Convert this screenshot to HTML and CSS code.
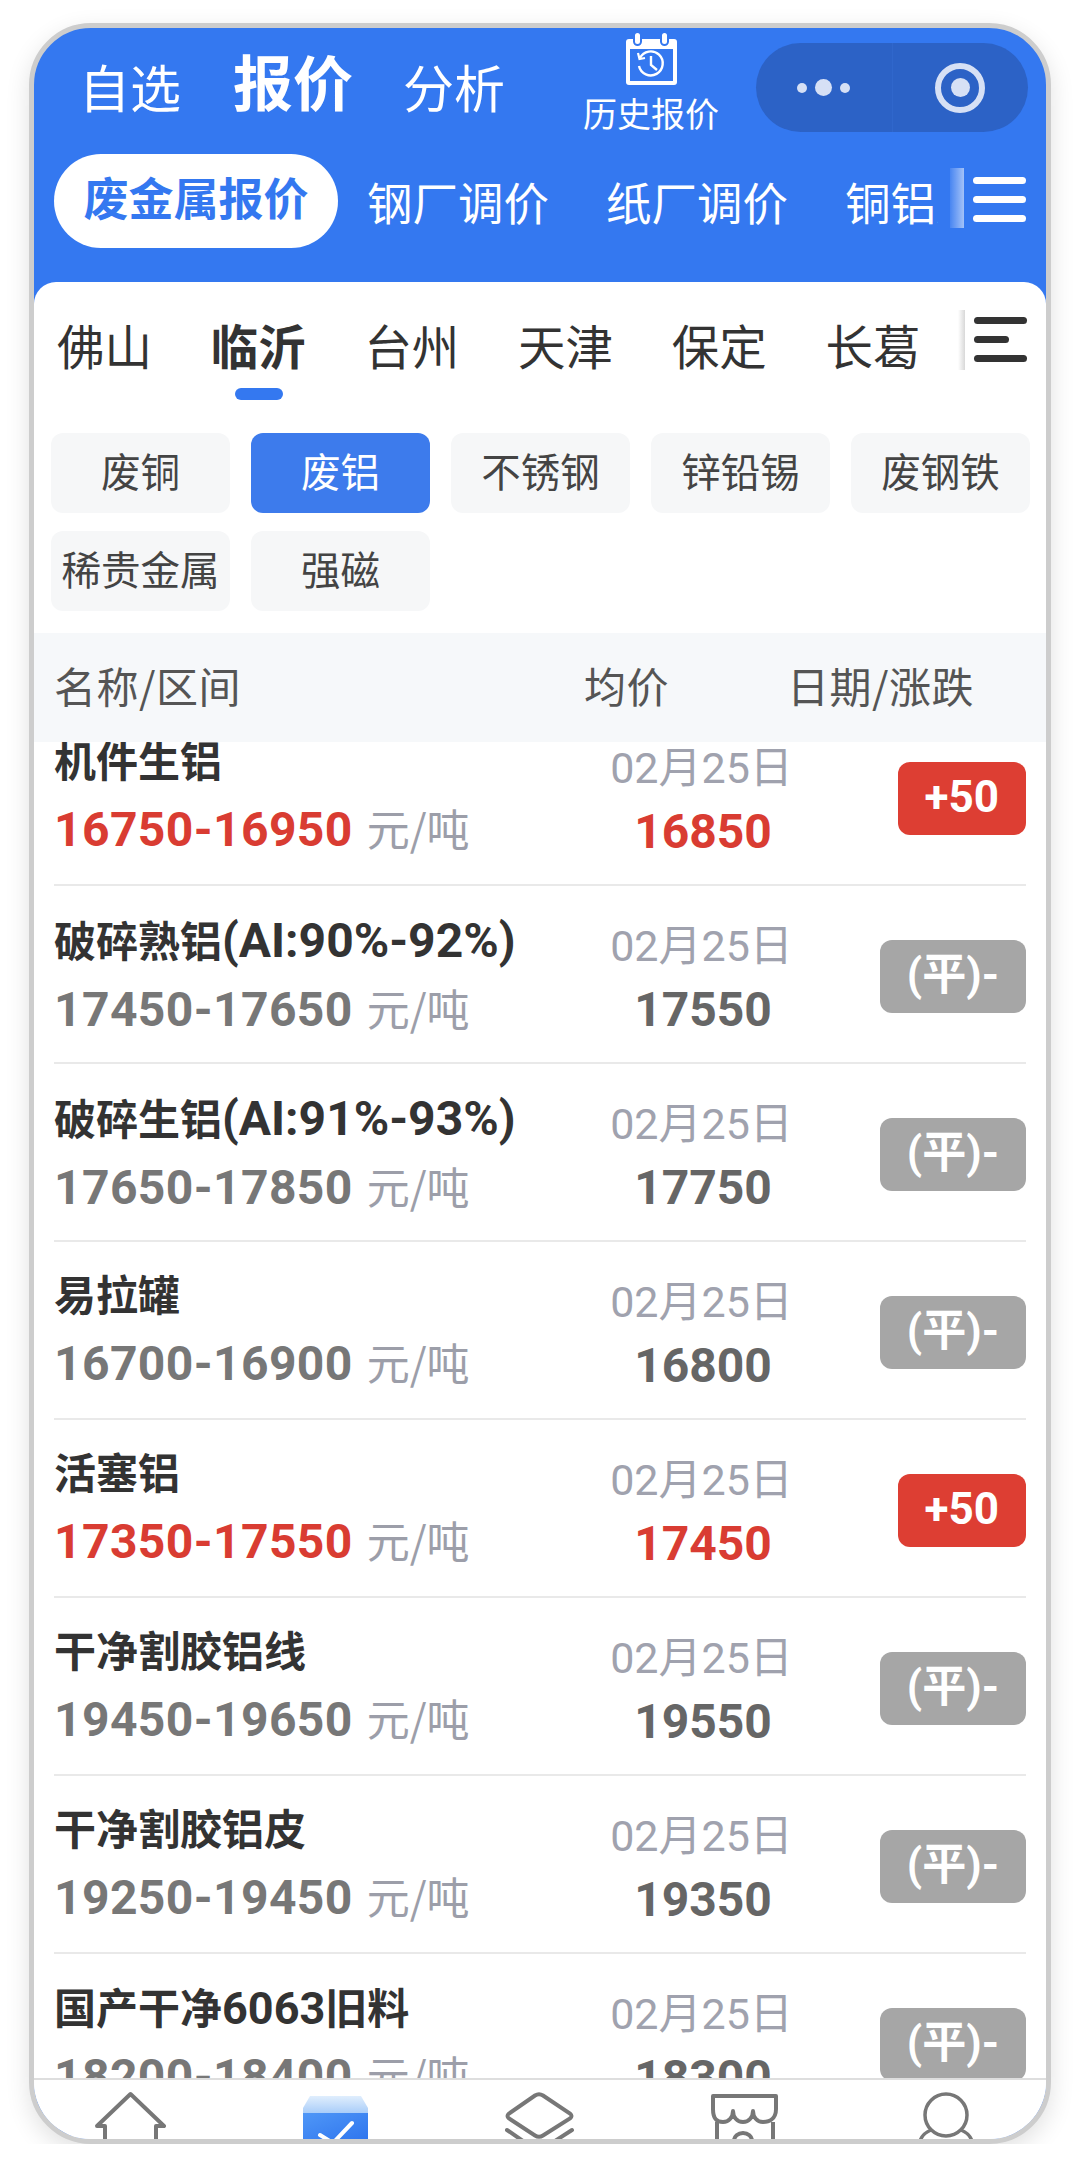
FILE: index.html
```html
<!DOCTYPE html>
<html lang="zh-CN">

<head>
    <meta charset="UTF-8">
    <title>报价</title>
    <link rel="stylesheet" href="styles.css">
</head>

<body>
    <div class="phone">
        <div class="top">
            <span class="top-tab">自选</span>
            <span class="top-tab current">报价</span>
            <span class="top-tab">分析</span>
            <div class="history">
                <svg class="history-icon" viewBox="0 0 51 53" width="51" height="53">
                    <path d="M3 7h45a3 3 0 0 1 3 3v40a3 3 0 0 1-3 3H3a3 3 0 0 1-3-3V10a3 3 0 0 1 3-3z" fill="#fff"/>
                    <rect x="4" y="17" width="43" height="32" fill="#3478f0"/>
                    <rect x="8" y="0" width="7" height="13" rx="3.5" fill="#fff" stroke="#3478f0" stroke-width="2"/>
                    <rect x="35" y="0" width="7" height="13" rx="3.5" fill="#fff" stroke="#3478f0" stroke-width="2"/>
                    <path d="M14 26A12 12 0 1 1 13 34" fill="none" stroke="#fff" stroke-width="2.4"/>
                    <path d="M12 21L13.500 27L19 26" fill="none" stroke="#fff" stroke-width="2.2"/>
                    <path d="M25 24V33L31 38" fill="none" stroke="#fff" stroke-width="2.4"/>
                </svg>
                <span>历史报价</span>
            </div>
            <div class="capsule">
                <div class="capsule-part">
                    <i class="dot"></i><i class="dot big"></i><i class="dot"></i>
                </div>
                <div class="capsule-part">
                    <i class="ring"></i>
                </div>
            </div>
        </div>

        <div class="nav">
            <div class="nav-scroll">
                <span class="nav-item current">废金属报价</span>
                <span class="nav-item">钢厂调价</span>
                <span class="nav-item">纸厂调价</span>
                <span class="nav-item">铜铝厂调价</span>
            </div>
            <i class="fade fade-blue"></i>
            <div class="burger">
                <i></i><i></i><i></i>
            </div>
        </div>

        <div class="panel">
            <div class="city">
                <div class="city-scroll">
                    <span class="city-item">佛山</span>
                    <span class="city-item current">临沂</span>
                    <span class="city-item">台州</span>
                    <span class="city-item">天津</span>
                    <span class="city-item">保定</span>
                    <span class="city-item">长葛</span>
                </div>
                <i class="fade fade-gray"></i>
                <div class="burger dark">
                    <i></i><i class="short"></i><i></i>
                </div>
            </div>

            <div class="tags">
                <span class="tag">废铜</span>
                <span class="tag current">废铝</span>
                <span class="tag">不锈钢</span>
                <span class="tag">锌铅锡</span>
                <span class="tag">废钢铁</span>
                <span class="tag">稀贵金属</span>
                <span class="tag">强磁</span>
            </div>

            <div class="thead">
                <span>名称/区间</span>
                <span>均价</span>
                <span>日期/涨跌</span>
            </div>

            <div class="list">
                <div class="row up">
                    <div class="name">
                        <div class="title">机件生铝</div>
                        <div class="range"><b>16750-16950</b> <span class="unit">元/吨</span></div>
                    </div>
                    <div class="mid">
                        <div class="date">02月25日</div>
                        <div class="avg">16850</div>
                    </div>
                    <div class="side"><span class="badge">+50</span></div>
                </div>
                <div class="row">
                    <div class="name">
                        <div class="title">破碎熟铝<span class="en">(AI:90%-92%)</span></div>
                        <div class="range"><b>17450-17650</b> <span class="unit">元/吨</span></div>
                    </div>
                    <div class="mid">
                        <div class="date">02月25日</div>
                        <div class="avg">17550</div>
                    </div>
                    <div class="side"><span class="badge">(平)-</span></div>
                </div>
                <div class="row">
                    <div class="name">
                        <div class="title">破碎生铝<span class="en">(AI:91%-93%)</span></div>
                        <div class="range"><b>17650-17850</b> <span class="unit">元/吨</span></div>
                    </div>
                    <div class="mid">
                        <div class="date">02月25日</div>
                        <div class="avg">17750</div>
                    </div>
                    <div class="side"><span class="badge">(平)-</span></div>
                </div>
                <div class="row">
                    <div class="name">
                        <div class="title">易拉罐</div>
                        <div class="range"><b>16700-16900</b> <span class="unit">元/吨</span></div>
                    </div>
                    <div class="mid">
                        <div class="date">02月25日</div>
                        <div class="avg">16800</div>
                    </div>
                    <div class="side"><span class="badge">(平)-</span></div>
                </div>
                <div class="row up">
                    <div class="name">
                        <div class="title">活塞铝</div>
                        <div class="range"><b>17350-17550</b> <span class="unit">元/吨</span></div>
                    </div>
                    <div class="mid">
                        <div class="date">02月25日</div>
                        <div class="avg">17450</div>
                    </div>
                    <div class="side"><span class="badge">+50</span></div>
                </div>
                <div class="row">
                    <div class="name">
                        <div class="title">干净割胶铝线</div>
                        <div class="range"><b>19450-19650</b> <span class="unit">元/吨</span></div>
                    </div>
                    <div class="mid">
                        <div class="date">02月25日</div>
                        <div class="avg">19550</div>
                    </div>
                    <div class="side"><span class="badge">(平)-</span></div>
                </div>
                <div class="row">
                    <div class="name">
                        <div class="title">干净割胶铝皮</div>
                        <div class="range"><b>19250-19450</b> <span class="unit">元/吨</span></div>
                    </div>
                    <div class="mid">
                        <div class="date">02月25日</div>
                        <div class="avg">19350</div>
                    </div>
                    <div class="side"><span class="badge">(平)-</span></div>
                </div>
                <div class="row">
                    <div class="name">
                        <div class="title">国产干净<span class="en num">6063</span>旧料</div>
                        <div class="range"><b>18200-18400</b> <span class="unit">元/吨</span></div>
                    </div>
                    <div class="mid">
                        <div class="date">02月25日</div>
                        <div class="avg">18300</div>
                    </div>
                    <div class="side"><span class="badge">(平)-</span></div>
                </div>
            </div>

            <div class="tabbar">
                <svg viewBox="0 0 73 60" width="73" height="60">
                    <path d="M11 62V47H3L36.500 15L70 47H62V62" fill="none" stroke="#777" stroke-width="4" stroke-linejoin="round"/>
                </svg>
                <svg viewBox="0 0 66 60" width="66" height="60">
                    <defs>
                        <linearGradient id="boxTop" x1="0" y1="0" x2="0" y2="1">
                            <stop offset="0" stop-color="#e0eefd"/>
                            <stop offset="1" stop-color="#a9cdf9"/>
                        </linearGradient>
                        <linearGradient id="boxBody" x1="0" y1="0" x2="1" y2="1">
                            <stop offset="0" stop-color="#4f97f7"/>
                            <stop offset="1" stop-color="#3076ee"/>
                        </linearGradient>
                    </defs>
                    <path d="M7 17H58L65 29V34H0V29z" fill="url(#boxTop)"/>
                    <rect x="0" y="34" width="65" height="26" fill="url(#boxBody)"/>
                    <path d="M17 56l13 8L49 44" fill="none" stroke="#fff" stroke-width="4" stroke-linecap="round"/>
                </svg>
                <svg viewBox="0 0 70 60" width="70" height="60">
                    <path d="M30 16.500Q34 14 38 16.500L65 34.500Q68 37 65 39.500L38 56.500Q34 59 30 56.500L4 39.500Q1 37 4 34.500Z" fill="none" stroke="#777" stroke-width="4"/>
                    <path d="M2 51L18 62M67 51L50 62" fill="none" stroke="#777" stroke-width="4" stroke-linecap="round"/>
                </svg>
                <svg viewBox="0 0 67 60" width="67" height="60">
                    <path d="M2 17H65V30C65 40 58 43 52 43C46 43 42 38 42 32C42 38 38 43 32 43C26 43 22 38 22 32C22 38 18 43 12 43C6 43 2 40 2 30Z" fill="none" stroke="#777" stroke-width="4" stroke-linejoin="round"/>
                    <path d="M6 43V62M62 43V62" fill="none" stroke="#777" stroke-width="4"/>
                    <path d="M23 62a9 8 0 0 1 18 0" fill="none" stroke="#777" stroke-width="4"/>
                </svg>
                <svg viewBox="-4 0 64 60" width="64" height="60">
                    <circle cx="28" cy="36" r="21" fill="none" stroke="#777" stroke-width="3.500"/>
                    <path d="M2 62c2-6 6-9 11-11M54 62c-2-6-6-9-11-11" fill="none" stroke="#777" stroke-width="3.500"/>
                </svg>
            </div>
        </div>
    </div>
</body>

</html>
```

FILE: styles.css
```css
* {
    padding: 0;
    margin: 0;
    box-sizing: border-box;
}

body {
    background: #fff;
    font-family: Roboto, "Noto Sans CJK SC", sans-serif;
    padding: 23px 29px 0;
}

i {
    display: block;
}

.phone {
    width: 1022px;
    height: 2121px;
    border: 5px solid #cdcdcd;
    border-radius: 62px;
    background: #3478f0;
    overflow: hidden;
    display: flex;
    flex-direction: column;
    box-shadow: 0 8px 24px rgba(0, 0, 0, 0.12);
}

/* 顶部 */
.top {
    height: 126px;
    flex: none;
    display: flex;
    align-items: center;
    padding-left: 45px;
    color: #fff;
}

.top-tab {
    font-size: 51px;
    line-height: 60px;
    margin-right: 52px;
}

.top-tab.current {
    font-size: 60px;
    font-weight: 700;
    margin-right: 50px;
    margin-bottom: 10px;
}

.history {
    width: 136px;
    margin-left: 26px;
    margin-bottom: 13px;
    display: flex;
    flex-direction: column;
    align-items: center;
    gap: 8px;
    font-size: 34px;
    line-height: 44px;
    white-space: nowrap;
}

.history-icon {
    display: block;
}

.capsule {
    width: 272px;
    height: 89px;
    margin-left: 37px;
    margin-bottom: 7px;
    border-radius: 45px;
    background: #2c62c6;
    display: flex;
    flex: none;
}

.capsule-part {
    flex: 1;
    display: flex;
    align-items: center;
    justify-content: center;
    gap: 8px;
}

.capsule-part:first-child {
    border-right: 1px solid #3067cc;
}

.dot {
    width: 10px;
    height: 10px;
    border-radius: 50%;
    background: #d6e0f5;
}

.dot.big {
    width: 17px;
    height: 17px;
}

.ring {
    width: 50px;
    height: 50px;
    border: 6px solid #d6e0f5;
    border-radius: 50%;
    display: flex;
    align-items: center;
    justify-content: center;
}

.ring::after {
    content: "";
    width: 19px;
    height: 19px;
    border-radius: 50%;
    background: #d6e0f5;
}

/* 分类 */
.nav {
    height: 128px;
    flex: none;
    display: flex;
    align-items: flex-start;
    padding-left: 20px;
}

.nav-scroll {
    width: 884px;
    height: 94px;
    overflow: hidden;
    display: flex;
    align-items: center;
    white-space: nowrap;
    color: #fff;
    font-size: 45.500px;
}

.nav-item {
    flex: none;
    margin-right: 57px;
}

.nav-item.current {
    width: 284px;
    height: 94px;
    line-height: 94px;
    margin-right: 29px;
    border-radius: 47px;
    background: #fff;
    color: #3478f0;
    font-size: 45px;
    font-weight: 700;
    text-align: center;
}

.fade {
    flex: none;
    width: 14px;
    height: 60px;
    margin: 14px 0 0 12px;
}

.fade-blue {
    background: linear-gradient(to right, rgba(255, 255, 255, 0.1), rgba(255, 255, 255, 0.55));
}

.burger {
    flex: none;
    width: 53px;
    margin: 23px 0 0 9px;
    display: flex;
    flex-direction: column;
    gap: 12px;
}

.burger i {
    height: 7px;
    border-radius: 4px;
    background: #fff;
}

/* 白色内容区 */
.panel {
    flex: 1;
    min-height: 0;
    background: #fff;
    border-radius: 22px 22px 0 0;
    display: flex;
    flex-direction: column;
}

.city {
    height: 151px;
    flex: none;
    display: flex;
    align-items: flex-start;
    padding-left: 23px;
}

.city-scroll {
    width: 894px;
    display: flex;
    gap: 58.700px;
    padding-top: 34px;
    font-size: 47.500px;
    line-height: 66px;
    color: #333;
}

.city-item {
    position: relative;
    width: 95px;
    white-space: nowrap;
}

.city-item.current {
    font-weight: 700;
}

.city-item.current::after {
    content: "";
    position: absolute;
    left: 24px;
    top: 72px;
    width: 48px;
    height: 12px;
    border-radius: 6px;
    background: #3478f0;
}

.city .fade {
    width: 7px;
    margin: 28px 0 0 7px;
}

.fade-gray {
    background: linear-gradient(to right, #fff, #d8d8d8);
}

.city .burger {
    margin: 35px 0 0 9px;
}

.burger.dark i {
    background: #333;
}

.burger.dark i.short {
    width: 35px;
}

.tags {
    flex: none;
    display: grid;
    grid-template-columns: repeat(5, 179px);
    grid-auto-rows: 80px;
    gap: 18px 21px;
    padding-left: 17px;
}

.tag {
    border-radius: 12px;
    background: #f6f7f8;
    color: #444;
    font-size: 39.500px;
    line-height: 82px;
    text-align: center;
    white-space: nowrap;
}

.tag.current {
    background: #3d7bec;
    color: #fff;
}

.thead {
    height: 109px;
    flex: none;
    margin-top: 22px;
    padding: 0 0 6px 20px;
    display: grid;
    grid-template-columns: 530px 203px 1fr;
    align-items: center;
    background: #f6f8fa;
    color: #555;
    font-family: "Noto Sans CJK SC", sans-serif;
    font-size: 42px;
    letter-spacing: 0.500px;
    line-height: 60px;
}

/* 列表 */
.list {
    flex: 1;
    min-height: 0;
    overflow: hidden;
}

.row {
    height: 178px;
    margin: 0 20px;
    border-bottom: 2px solid #e9e9e9;
    display: grid;
    grid-template-columns: 549px 197px 1fr;
}

.row:first-child {
    margin-top: -34px;
}

.name {
    padding-top: 21px;
}

.title {
    font-size: 42px;
    line-height: 68px;
    font-weight: 700;
    color: #333;
    white-space: nowrap;
}

.en {
    font-size: 48px;
}

.en.num {
    font-size: 45px;
}

.range {
    height: 69px;
    line-height: 66px;
    white-space: nowrap;
    color: #777;
}

.range b {
    font-size: 48px;
    letter-spacing: 0.400px;
}

.unit {
    font-family: "Noto Sans CJK SC", sans-serif;
    font-size: 43px;
    line-height: 1;
    color: #9c9ea9;
    margin-left: 10px;
}

.mid {
    padding-top: 27px;
    text-align: center;
    white-space: nowrap;
}

.date {
    font-size: 43px;
    line-height: 66px;
    color: #a0a2ae;
}

.avg {
    font-size: 48px;
    line-height: 62px;
    font-weight: 700;
    color: #666;
    padding-left: 3px;
}

.side {
    padding-top: 54px;
    display: flex;
    justify-content: flex-end;
    align-items: flex-start;
}

.badge {
    height: 73px;
    padding: 0 27px;
    border-radius: 12px;
    background: #a6a6a6;
    color: #fff;
    font-size: 44px;
    line-height: 70px;
    font-weight: 700;
}

.up .range,
.up .avg {
    color: #d93c32;
}

.up .badge {
    background: #dd3e33;
}

/* 底部 */
.tabbar {
    height: 61px;
    flex: none;
    overflow: hidden;
    background: #fff;
    border-top: 2px solid #dedede;
    display: flex;
    align-items: flex-start;
    gap: 136px;
    padding-left: 60px;
}

.tabbar svg {
    display: block;
    margin-top: -1px;
    flex: none;
}
```
